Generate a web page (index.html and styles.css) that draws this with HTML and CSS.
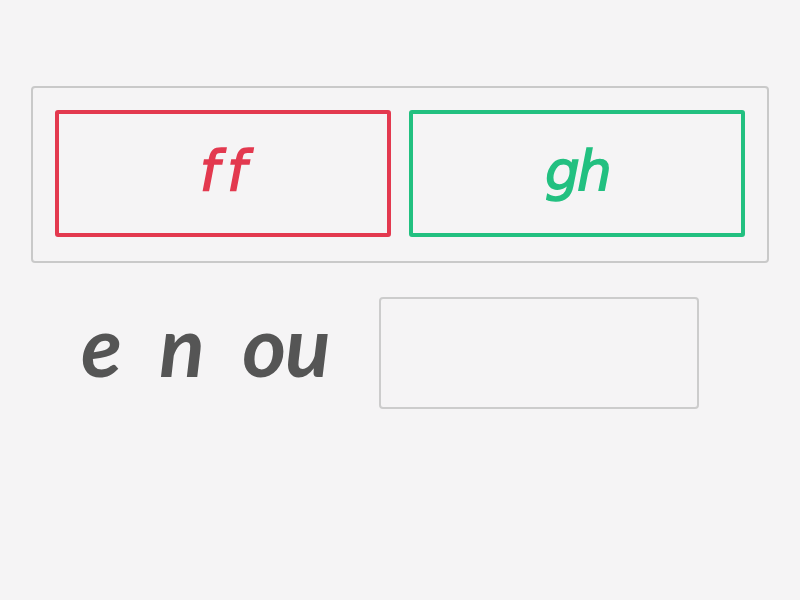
FILE: index.html
```html
<!DOCTYPE html>
<html lang="en">
<head>
  <meta charset="UTF-8" />
  <meta name="viewport" content="width=device-width, initial-scale=1.0"/>
  <title>Group sort</title>
  <link rel="stylesheet" href="styles.css">
</head>
<body>

  <!-- groups -->
  <div class="groups">
    <div class="group red"><span>ff</span></div>
    <div class="group green"><span>gh</span></div>
  </div>

  <!-- word to place -->
  <div class="question">
    <div class="word">e n ou</div>
    <div class="slot"></div>
  </div>

</body>
</html>
```

FILE: styles.css
```css
body {
  font-family: "DejaVu Sans", sans-serif;
  background: #f5f4f5;
  margin: 0;
  padding: 86px 31px 0;
}
.groups {
  display: flex;
  gap: 18px;
  height: 177px;
  box-sizing: border-box;
  padding: 22px 22px 24px;
  border: 2px solid #c9c9c9;
  border-radius: 4px;
}
.group {
  flex: 1;
  display: flex;
  align-items: center;
  justify-content: center;
  border: 4px solid;
  border-radius: 3px;
  font-style: italic;
  font-size: 55px;
  font-variant-ligatures: none;
  -webkit-text-stroke: 1.5px currentColor;
  padding-bottom: 6px;
}
.red {
  border-color: #e3394f;
  color: #e3394f;
}
.red span {
  letter-spacing: 8px;
  margin-left: 8px;
}
.green {
  border-color: #22c080;
  color: #22c080;
}
.green span {
  letter-spacing: -3px;
}
.question {
  display: flex;
  align-items: center;
  margin-top: 34px;
  padding-left: 50px;
}
.word {
  width: 298px;
  font-family: Lato, "DejaVu Sans", sans-serif;
  font-style: italic;
  font-weight: bold;
  font-size: 84px;
  line-height: 1;
  color: #555;
  letter-spacing: -1px;
  word-spacing: 21px;
  padding-bottom: 17px;
}
.slot {
  width: 320px;
  height: 112px;
  box-sizing: border-box;
  border: 2px solid #cccccc;
  border-radius: 4px;
}
```
